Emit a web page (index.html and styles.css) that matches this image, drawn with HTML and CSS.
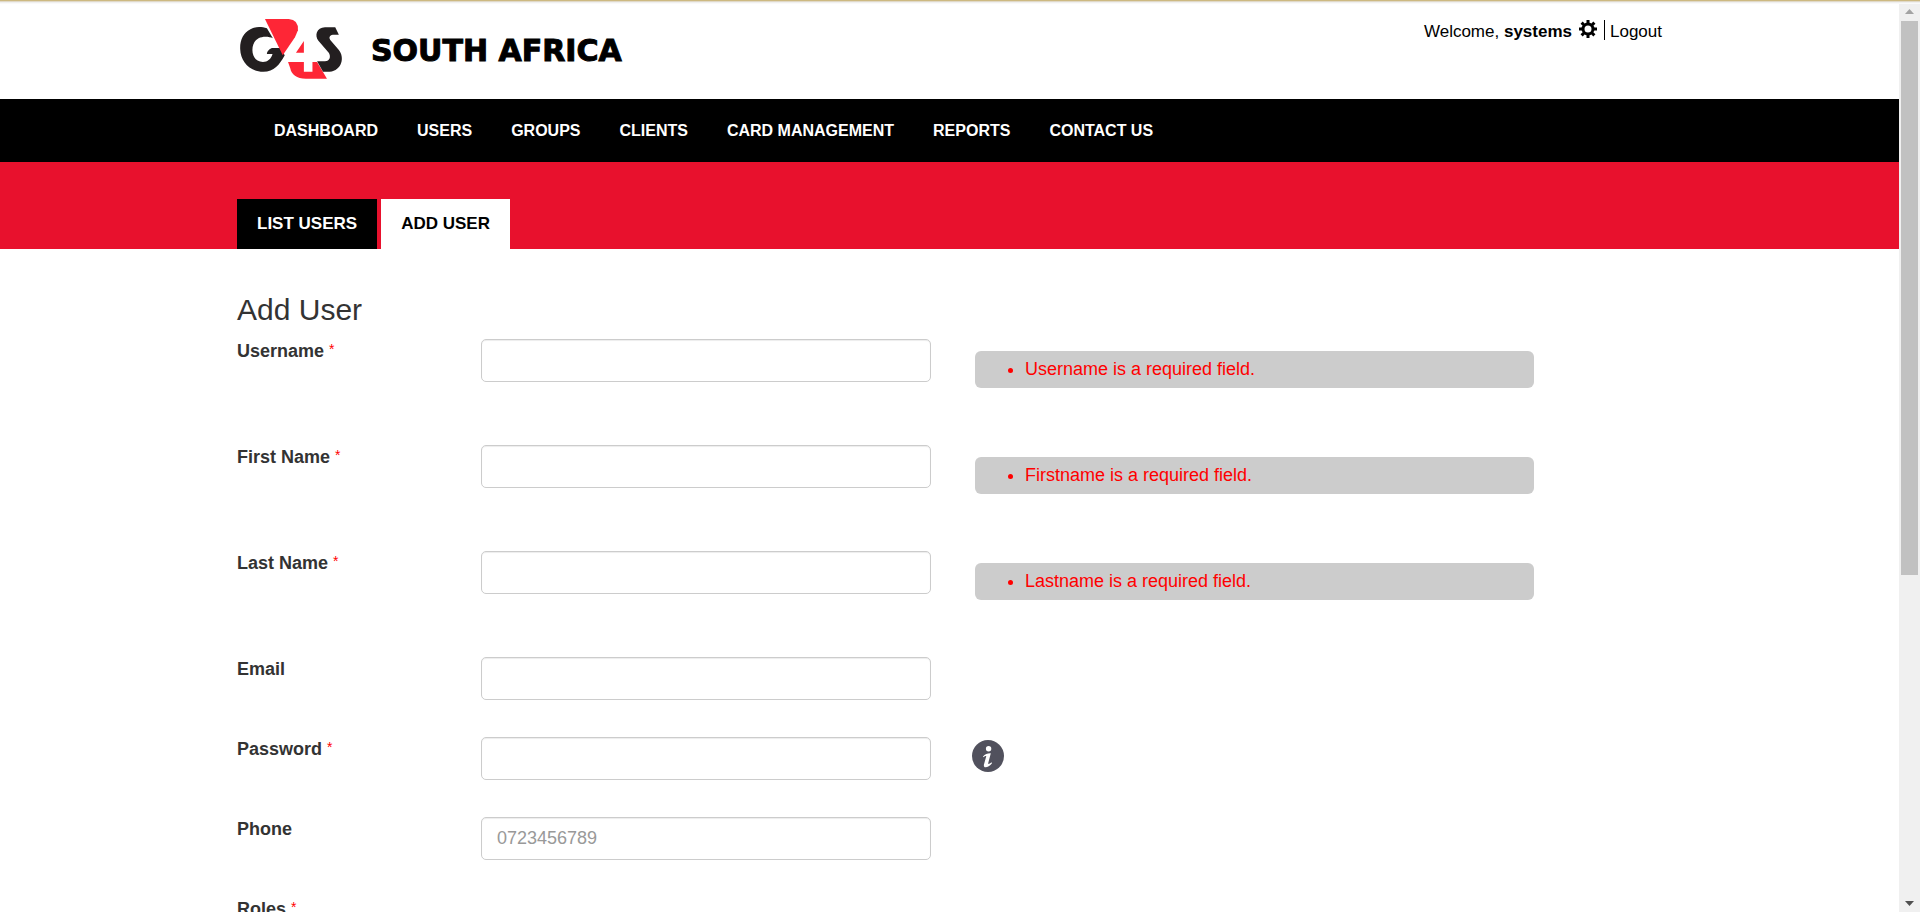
FILE: index.html
```html
<!DOCTYPE html>
<html lang="en">
<head>
<meta charset="utf-8">
<title>Add User</title>
<link rel="stylesheet" href="styles.css">
</head>
<body>
<div class="page">
  <header class="header container">
    <a class="brand" href="#" aria-label="G4S South Africa">
      <svg class="brand-mark" viewBox="-3 -3 330 200" aria-hidden="true">
        <path fill="#231f20" d="M86 28C70 23 50 22 36 31C14 42 4 64 5 91C6 129 34 160 75 160C108 160 124 139 140 110L127 88L101 88C88 94 86 102 86 106L103 106C99 121 88 130 74 130C54 130 42 114 42 94C42 68 58 54 82 54C90 54 98 56 104 58Z"/>
        <path fill="#fe2636" d="M80 0H152Q182 2 180 34L171 55L134 110Z"/>
        <path fill="#fe2636" d="M198 67V102H174ZM150 130H198V160H224V130H238L268 181H204C176 181 160 168 157 150Z"/>
        <path fill="#231f20" d="M293 25H262C236 26 230 50 242 66L274 103C280 114 277 128 262 128H238L256 160H276C314 156 322 116 304 94L278 64C272 54 278 48 290 48H304Z"/>
      </svg>
      <span class="brand-name">SOUTH AFRICA</span>
    </a>
    <div class="account">
      <span>Welcome, <strong>systems</strong></span>
      <a class="settings" href="#" aria-label="Settings">
        <svg viewBox="0 0 18 18" width="18" height="18"><circle cx="9" cy="9" r="5" fill="none" stroke="#000" stroke-width="3"/><path stroke="#000" stroke-width="3" d="M9 0V3M9 15V18M0 9H3M15 9H18M2.600 2.600L5 5M13 13L15.400 15.400M15.400 2.600L13 5M5 13L2.600 15.400"/></svg>
      </a>
      <a class="logout" href="#">Logout</a>
    </div>
  </header>
  <nav class="menu">
    <div class="container menu-items">
      <a href="#">DASHBOARD</a>
      <a href="#">USERS</a>
      <a href="#">GROUPS</a>
      <a href="#">CLIENTS</a>
      <a href="#">CARD MANAGEMENT</a>
      <a href="#">REPORTS</a>
      <a href="#">CONTACT US</a>
    </div>
  </nav>
  <nav class="subnav">
    <div class="container tabs">
      <a class="tab" href="#">LIST USERS</a>
      <a class="tab active" href="#">ADD USER</a>
    </div>
  </nav>
  <main class="container">
    <h1>Add User</h1>
    <form>
      <div class="row with-error">
        <label for="username">Username <sup>*</sup></label>
        <input id="username" type="text">
        <ul class="error"><li>Username is a required field.</li></ul>
      </div>
      <div class="row with-error">
        <label for="firstname">First Name <sup>*</sup></label>
        <input id="firstname" type="text">
        <ul class="error"><li>Firstname is a required field.</li></ul>
      </div>
      <div class="row with-error">
        <label for="lastname">Last Name <sup>*</sup></label>
        <input id="lastname" type="text">
        <ul class="error"><li>Lastname is a required field.</li></ul>
      </div>
      <div class="row">
        <label for="email">Email</label>
        <input id="email" type="email">
      </div>
      <div class="row">
        <label for="password">Password <sup>*</sup></label>
        <input id="password" type="password">
        <button class="info" type="button" aria-label="Password rules">
          <svg viewBox="0 0 32 32" width="32" height="32"><circle cx="16" cy="16" r="16" fill="#51515d"/><circle cx="16.600" cy="8.700" r="2.700" fill="#fff"/><path fill="#fff" d="M11 16.500C13 14 16 13 18.800 13.200L16.200 23.300C16 24.500 17.500 24 19.500 22.300L20 23.200C18 25.800 15.500 27.200 13.500 27.200C12 27.200 11.600 26 12 24.300L14.200 16.500C14.400 15.500 13 15.800 11.500 17.300Z"/></svg>
        </button>
      </div>
      <div class="row">
        <label for="phone">Phone</label>
        <input id="phone" type="tel" placeholder="0723456789">
      </div>
      <div class="row">
        <span class="label">Roles <sup>*</sup></span>
      </div>
    </form>
  </main>
</div>
<div class="scrollbar" aria-hidden="true">
  <svg viewBox="0 0 9 5" width="9" height="5"><path fill="#a3a3a3" d="M0 5L4.500 0L9 5Z"/></svg>
  <div class="track"><div class="thumb"></div></div>
  <svg viewBox="0 0 9 5" width="9" height="5"><path fill="#505050" d="M0 0H9L4.500 5Z"/></svg>
</div>
</body>
</html>
```
FILE: styles.css
```css
* { box-sizing: border-box; }
body {
  margin: 0;
  height: 100vh;
  overflow: hidden;
  display: flex;
  background: #fff;
  color: #333;
  font: 18px/25px "Liberation Sans", Arial, sans-serif;
}
body::before {
  content: "";
  position: fixed;
  inset: 0 0 auto;
  height: 4px;
  background: linear-gradient(#cdb981 0 1px, #e0d9c8 1px 2px, #f0f0f0 2px 3px, #fafafa 3px);
}
a { color: inherit; text-decoration: none; }
.page { flex: 1; min-width: 0; overflow: hidden; }
.container { max-width: 1425px; margin: 0 auto; }

.header { height: 99px; display: flex; justify-content: space-between; align-items: flex-start; color: #000; }
.brand { display: flex; align-items: center; gap: 24px; padding-top: 18px; }
.brand-mark { width: 110px; height: 66px; }
.brand-name { font: bold 30px/64px "DejaVu Sans", sans-serif; -webkit-text-stroke: 1px #000; }
.account { display: flex; padding-top: 19px; font-size: 17px; }
.settings { margin: 1px 7px 0 7px; line-height: 0; }
.logout { position: relative; padding-left: 6px; }
.logout::before { content: ""; position: absolute; left: 0; top: 1px; width: 1px; height: 20px; background: #000; }

.menu { background: #000; color: #fff; }
.menu-items { display: flex; gap: 39px; padding: 0 37px; font-size: 16px; font-weight: bold; line-height: 63px; }
.subnav { background: #e8112d; padding-top: 37px; }
.tabs { display: flex; gap: 4px; font-size: 17px; font-weight: bold; line-height: 50px; }
.tab { padding: 0 20px; background: #000; color: #fff; }
.tab.active { background: #fff; color: #000; }

h1 { margin: 44px 0 13px; font-size: 30px; line-height: 33px; font-weight: normal; }
.row { display: grid; grid-template-columns: minmax(0, 244px) minmax(0, 450px) minmax(0, 603px); align-items: start; min-height: 80px; }
.with-error { min-height: 106px; }
label, .label { font-weight: bold; }
sup { color: #f00; font-size: 14px; font-weight: normal; line-height: 0; vertical-align: 3px; }
input {
  width: 100%;
  height: 43px;
  padding: 0 15px;
  border: 1px solid #ccc;
  border-radius: 5px;
  box-shadow: inset 0 1px 1px rgba(0, 0, 0, .075);
  background: #fff;
  color: #555;
  font: inherit;
}
input::placeholder { color: #999; opacity: 1; }
.error { margin: 12px 0 0 44px; padding: 6px 0 6px 50px; border-radius: 6px; background: #ccc; color: #f00; }
.info { margin: 3px 0 0 41px; padding: 0; border: 0; background: none; width: 32px; height: 32px; line-height: 0; }

.scrollbar { width: 21px; padding: 9px 0 6px; background: #f0f0f0; display: flex; flex-direction: column; align-items: center; gap: 7px; }
.track { flex: 1; width: 17px; }
.thumb { height: calc(64% - 5px); background: #c1c1c1; }
```
